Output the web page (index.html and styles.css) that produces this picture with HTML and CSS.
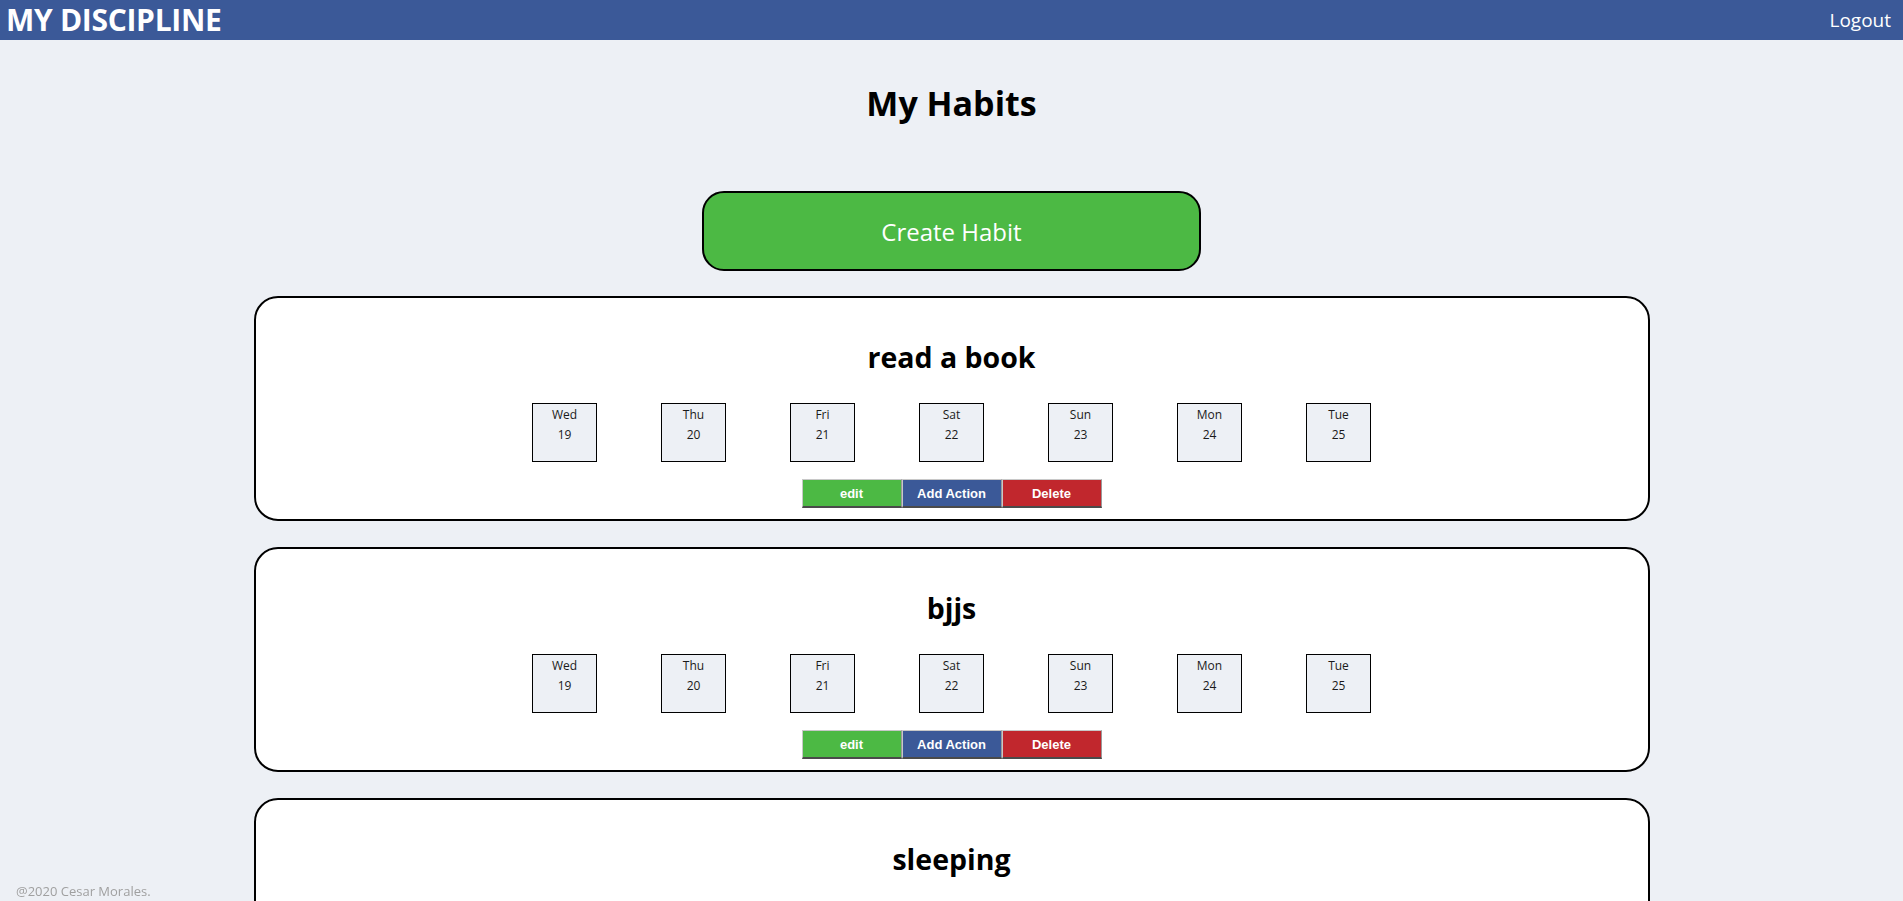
FILE: index.html
```html
<!DOCTYPE html>
<html lang="en">
<head>
<meta charset="utf-8">
<title>My Discipline</title>
<link rel="stylesheet" href="styles.css">
</head>
<body>
<header class="topbar">
  <div class="brand">MY DISCIPLINE</div>
  <a class="logout" href="#">Logout</a>
</header>
<main class="main">
  <h1 class="page-title">My Habits</h1>
  <button class="create-btn">Create Habit</button>

  <section class="habit-card">
    <h2 class="habit-title">read a book</h2>
    <div class="days">
      <div class="day"><span>Wed</span><span>19</span></div>
      <div class="day"><span>Thu</span><span>20</span></div>
      <div class="day"><span>Fri</span><span>21</span></div>
      <div class="day"><span>Sat</span><span>22</span></div>
      <div class="day"><span>Sun</span><span>23</span></div>
      <div class="day"><span>Mon</span><span>24</span></div>
      <div class="day"><span>Tue</span><span>25</span></div>
    </div>
    <div class="actions">
      <button class="act act-edit">edit</button><button class="act act-add">Add Action</button><button class="act act-del">Delete</button>
    </div>
  </section>

  <section class="habit-card">
    <h2 class="habit-title">bjjs</h2>
    <div class="days">
      <div class="day"><span>Wed</span><span>19</span></div>
      <div class="day"><span>Thu</span><span>20</span></div>
      <div class="day"><span>Fri</span><span>21</span></div>
      <div class="day"><span>Sat</span><span>22</span></div>
      <div class="day"><span>Sun</span><span>23</span></div>
      <div class="day"><span>Mon</span><span>24</span></div>
      <div class="day"><span>Tue</span><span>25</span></div>
    </div>
    <div class="actions">
      <button class="act act-edit">edit</button><button class="act act-add">Add Action</button><button class="act act-del">Delete</button>
    </div>
  </section>

  <section class="habit-card">
    <h2 class="habit-title">sleeping</h2>
    <div class="days">
      <div class="day"><span>Wed</span><span>19</span></div>
      <div class="day"><span>Thu</span><span>20</span></div>
      <div class="day"><span>Fri</span><span>21</span></div>
      <div class="day"><span>Sat</span><span>22</span></div>
      <div class="day"><span>Sun</span><span>23</span></div>
      <div class="day"><span>Mon</span><span>24</span></div>
      <div class="day"><span>Tue</span><span>25</span></div>
    </div>
    <div class="actions">
      <button class="act act-edit">edit</button><button class="act act-add">Add Action</button><button class="act act-del">Delete</button>
    </div>
  </section>
</main>
<footer class="footer">@2020 Cesar Morales.</footer>
</body>
</html>
```

FILE: styles.css
```css
* { box-sizing: border-box; }

body {
  margin: 0;
  background: #edf0f5;
  font-family: "Open Sans", "Noto Sans", sans-serif;
  color: #000;
}

.topbar {
  height: 40px;
  background: #3b5998;
  display: flex;
  align-items: center;
  justify-content: space-between;
  padding: 0 12px 0 6px;
}

.brand {
  color: #fff;
  font-weight: 700;
  font-size: 30px;
  line-height: 40px;
  letter-spacing: -0.3px;
}

.logout {
  color: #fff;
  text-decoration: none;
  font-size: 19px;
  line-height: 40px;
}

.main {
  display: flex;
  flex-direction: column;
  align-items: center;
  padding-top: 40px;
  padding-bottom: 40px;
}

.page-title {
  margin: 0;
  font-size: 34px;
  line-height: 46px;
  font-weight: 700;
}

.create-btn {
  margin-top: 65px;
  margin-bottom: -1px;
  width: 499px;
  height: 80px;
  background: #4cb944;
  border: 2px solid #000;
  border-radius: 22px;
  color: #fff;
  font-family: "Open Sans", "Noto Sans", sans-serif;
  font-size: 24px;
  cursor: pointer;
}

.habit-card {
  margin-top: 26px;
  width: 1396px;
  background: #fff;
  border: 2px solid #000;
  border-radius: 24px;
  padding: 39px 0 11px;
  display: flex;
  flex-direction: column;
  align-items: center;
}

.habit-title {
  margin: 0;
  font-size: 28.5px;
  line-height: 40px;
  font-weight: 700;
}

.days {
  margin-top: 26px;
  display: flex;
}

.day {
  width: 65px;
  height: 59px;
  margin: 0 32px;
  border: 1px solid #000;
  background: #edf0f5;
  display: flex;
  flex-direction: column;
  align-items: center;
  padding-top: 1px;
  font-size: 12px;
  line-height: 20px;
  color: #1a1a1a;
}

.actions {
  margin-top: 17px;
  display: flex;
}

.act {
  width: 100px;
  height: 29px;
  margin: 0;
  border-style: solid;
  border-width: 1px 1px 2px 1px;
  border-color: #c8c8c8 #9a9a9a #4a4a4a #c8c8c8;
  color: #fff;
  font-family: "Liberation Sans", Arial, sans-serif;
  font-weight: 700;
  font-size: 13px;
  cursor: pointer;
}

.act-edit { background: #4cb944; }
.act-add { background: #3b5998; }
.act-del { background: #c1272d; }

.footer {
  position: fixed;
  left: 16px;
  bottom: 0;
  font-size: 13px;
  line-height: 20px;
  color: #a0a0a0;
}
```
